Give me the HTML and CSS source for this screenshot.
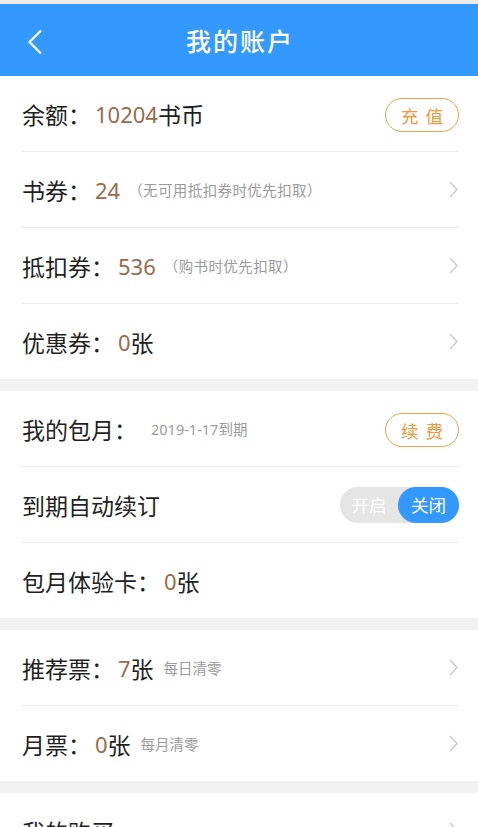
FILE: index.html
```html
<!DOCTYPE html>
<html lang="zh">
<head>
<meta charset="utf-8">
<title>我的账户</title>
<link rel="stylesheet" href="styles.css">
</head>
<body>
<div class="status"><span class="status-text">20:00</span></div>
<header class="topbar">
  <svg class="back" width="16" height="26" viewBox="0 0 16 26"><polyline points="14,1.5 2.5,13 14,24.5" fill="none" stroke="#fff" stroke-width="2.2" stroke-linejoin="miter"/></svg>
  <h1 class="title">我的账户</h1>
</header>

<section class="group">
  <div class="row">
    <span class="label">余额：</span><span class="num">10204</span><span class="label">书币</span>
    <span class="btn">充值</span>
  </div>
  <div class="row">
    <span class="label">书券：</span><span class="num">24</span><span class="note paren">（无可用抵扣券时优先扣取）</span>
    <svg class="chev" width="9" height="17" viewBox="0 0 9 17"><polyline points="1,1 8,8.5 1,16" fill="none" stroke="#c9c9c9" stroke-width="1.4"/></svg>
  </div>
  <div class="row">
    <span class="label">抵扣券：</span><span class="num">536</span><span class="note paren">（购书时优先扣取）</span>
    <svg class="chev" width="9" height="17" viewBox="0 0 9 17"><polyline points="1,1 8,8.5 1,16" fill="none" stroke="#c9c9c9" stroke-width="1.4"/></svg>
  </div>
  <div class="row">
    <span class="label">优惠券：</span><span class="num">0</span><span class="label">张</span>
    <svg class="chev" width="9" height="17" viewBox="0 0 9 17"><polyline points="1,1 8,8.5 1,16" fill="none" stroke="#c9c9c9" stroke-width="1.4"/></svg>
  </div>
</section>

<section class="group">
  <div class="row">
    <span class="label">我的包月：</span><span class="note date">2019-1-17到期</span>
    <span class="btn">续费</span>
  </div>
  <div class="row">
    <span class="label">到期自动续订</span>
    <div class="toggle"><span class="opt">开启</span><span class="opt on">关闭</span></div>
  </div>
  <div class="row">
    <span class="label">包月体验卡：</span><span class="num">0</span><span class="label">张</span>
  </div>
</section>

<section class="group">
  <div class="row">
    <span class="label">推荐票：</span><span class="num">7</span><span class="label">张</span><span class="note small">每日清零</span>
    <svg class="chev" width="9" height="17" viewBox="0 0 9 17"><polyline points="1,1 8,8.5 1,16" fill="none" stroke="#c9c9c9" stroke-width="1.4"/></svg>
  </div>
  <div class="row">
    <span class="label">月票：</span><span class="num">0</span><span class="label">张</span><span class="note small">每月清零</span>
    <svg class="chev" width="9" height="17" viewBox="0 0 9 17"><polyline points="1,1 8,8.5 1,16" fill="none" stroke="#c9c9c9" stroke-width="1.4"/></svg>
  </div>
</section>

<section class="group">
  <div class="row">
    <span class="label">我的购买</span>
    <svg class="chev" width="9" height="17" viewBox="0 0 9 17"><polyline points="1,1 8,8.5 1,16" fill="none" stroke="#c9c9c9" stroke-width="1.4"/></svg>
  </div>
</section>
</body>
</html>
```

FILE: styles.css
```css
html, body {
  margin: 0;
  padding: 0;
}
body {
  background: #f2f2f2;
  font-family: "Noto Sans", "Noto Sans CJK SC", sans-serif;
  color: #1f1f1f;
  width: 478px;
  height: 827px;
  overflow: hidden;
}
.status {
  height: 4px;
  background: #ececec;
  overflow: hidden;
}
.status-text {
  display: block;
  margin-top: -15px;
  margin-left: 8px;
  font-size: 16px;
  line-height: 16px;
  font-weight: 700;
  color: #333;
}
.topbar {
  height: 72px;
  background: #3399ff;
  display: flex;
  align-items: center;
  justify-content: center;
  position: relative;
}
.back {
  position: absolute;
  left: 27px;
  top: 25px;
}
.title {
  margin: 0;
  font-size: 25px;
  font-weight: 500;
  color: #fff;
  letter-spacing: 2px;
  padding-left: 2px;
}
.group {
  background: #fff;
  margin-bottom: 12px;
}
.row {
  height: 75px;
  margin: 0 19px 0 21px;
  padding-left: 1px;
  display: flex;
  align-items: center;
  border-bottom: 1px solid #ededed;
}
.row:last-child {
  border-bottom: none;
}
.label {
  font-size: 23px;
  color: #1f1f1f;
}
.num {
  font-size: 22px;
  color: #9a6a4b;
  margin-left: 4px;
}
.note {
  color: #9b9b9b;
}
.paren {
  font-size: 14.5px;
  margin-left: 8px;
  letter-spacing: 0.4px;
}
.date {
  font-size: 14.5px;
  margin-left: 14px;
}
.small {
  font-size: 14.5px;
  margin-left: 10px;
}
.btn {
  margin-left: auto;
  height: 32px;
  border: 1.5px solid #f0a24a;
  border-radius: 18px;
  color: #f2963a;
  font-size: 17.5px;
  letter-spacing: 7px;
  padding-left: 7px;
  box-sizing: content-box;
  display: flex;
  align-items: center;
  justify-content: center;
  width: 65px;
  margin-top: 3px;
}
.chev {
  margin-left: auto;
  margin-right: 1px;
}
.toggle {
  margin-left: auto;
  width: 119px;
  height: 36px;
  border-radius: 18px;
  background: #e5e5e5;
  display: flex;
  align-items: center;
  justify-content: space-between;
}
.opt {
  font-size: 17.5px;
  color: #fff;
  width: 58px;
  text-align: center;
  line-height: 36px;
}
.opt.on {
  width: 61px;
  height: 36px;
  border-radius: 18px;
  background: #3399ff;
}
```
